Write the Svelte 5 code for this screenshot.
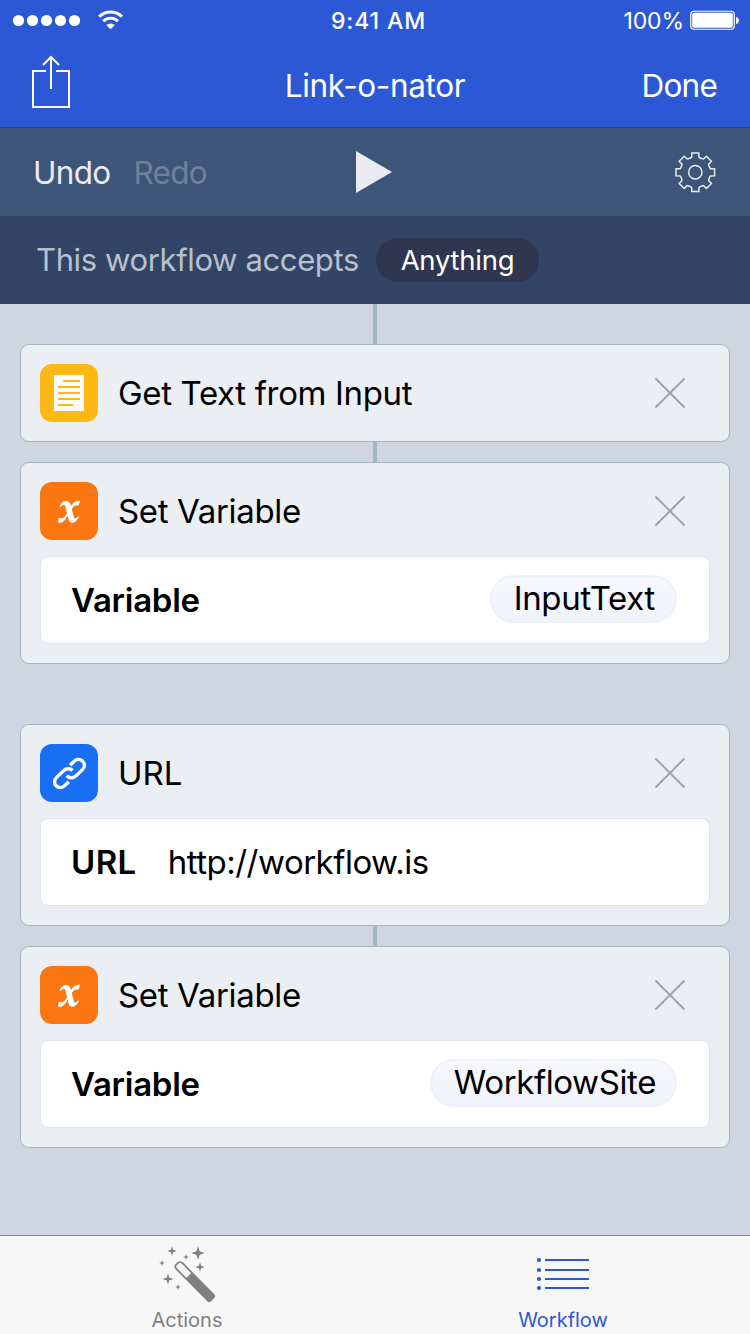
<script>
  const cards = [
    { icon: 'text', title: 'Get Text from Input', cls: 't-get', link: true },
    { icon: 'var', title: 'Set Variable', cls: 't-set', link: false, label: 'Variable', token: 'InputText', tokenCls: 'k-input' },
    { icon: 'url', title: 'URL', cls: 't-url', link: true, label: 'URL', value: 'http://workflow.is' },
    { icon: 'var', title: 'Set Variable', cls: 't-set', link: false, label: 'Variable', token: 'WorkflowSite', tokenCls: 'k-site' }
  ];

  function gearPath(cx, cy) {
    const outer = 19.6, inner = 15.2;
    const pts = [];
    for (let i = 0; i < 8; i++) {
      const c = (i * Math.PI) / 4;
      const spots = [[inner, -0.30], [inner + 0.4, -0.235], [outer, -0.18], [outer, 0.18], [inner + 0.4, 0.235], [inner, 0.30]];
      for (const [r, a] of spots) {
        pts.push(`${(cx + r * Math.sin(c + a)).toFixed(2)} ${(cy - r * Math.cos(c + a)).toFixed(2)}`);
      }
    }
    return 'M' + pts.join('L') + 'Z';
  }

  const sparkles = [
    [32, 15, 4.8], [58, 17, 6.8], [46, 21, 2.9], [22, 27, 2.9], [60, 31, 4.8], [28, 43, 5.6], [38, 51, 2.9]
  ];
  const star = ([x, y, r]) => {
    const k = r * 0.24;
    return `M${x} ${y - r}L${x + k} ${y - k}L${x + r} ${y}L${x + k} ${y + k}L${x} ${y + r}L${x - k} ${y + k}L${x - r} ${y}L${x - k} ${y - k}Z`;
  };
</script>

<div class="screen">
  <header>
    <div class="status">
      <svg class="signal" width="130" height="40" viewBox="0 0 130 40">
        {#each [18.5, 32.5, 46.5, 60.5, 74.5] as x}
          <circle cx={x} cy="20.5" r="5.6" fill="#fff" />
        {/each}
        <g fill="none" stroke="#fff" stroke-width="2.9">
          <path d="M99.2 16.6a16.3 16.3 0 0 1 22.8 0" />
          <path d="M103.2 21.1a10.6 10.6 0 0 1 14.8 0" />
        </g>
        <path d="M106.3 25.1a6.3 6.3 0 0 1 8.6 0L110.6 29.2Z" fill="#fff" />
      </svg>
      <span class="time">9:41 AM</span>
      <div class="power">
        <span class="pct">100%</span>
        <svg width="50" height="20" viewBox="0 0 50 20">
          <rect x="0.75" y="1.25" width="43.5" height="18" rx="3.2" fill="none" stroke="#fff" stroke-width="1.2" />
          <rect x="2.2" y="2.7" width="40.6" height="15.1" rx="1.8" fill="#fff" />
          <path d="M46 7c4 .8 4 6 0 7Z" fill="#fff" />
        </svg>
      </div>
    </div>
    <nav>
      <svg class="share" width="40" height="54" viewBox="0 0 40 54" fill="none" stroke="#fff" stroke-width="2">
        <path d="M15 16H2V52H38V16H25M20 34V2M12 10L20 2L28 10" />
      </svg>
      <h1>Link-o-nator</h1>
      <span class="done">Done</span>
    </nav>
  </header>

  <div class="toolbar">
    <div class="history"><span class="undo">Undo</span><span class="redo">Redo</span></div>
    <svg width="38" height="44" viewBox="0 0 38 44"><path d="M1 1L37 22L1 43Z" fill="#e9ebf1" /></svg>
    <div class="settings">
      <svg width="44" height="44" viewBox="0 0 44 44" fill="none" stroke="#e6e9ef" stroke-width="1.5">
        <path d={gearPath(22.3, 22.3)} /><circle cx="22.3" cy="22.3" r="6.7" />
      </svg>
    </div>
  </div>
  <div class="accepts">
    <span class="label">This workflow accepts</span>
    <span class="pill"><span>Anything</span></span>
  </div>

  <main>
    <div class="wire lead"></div>
    {#each cards as card, i}
      <section>
        <div class="head">
          <div class="tile {card.icon}">
            <svg width="58" height="58" viewBox="0 0 58 58">
              {#if card.icon === 'text'}
                <rect x="14" y="11" width="30" height="36" fill="#fff" />
                <path d="M23 17H40M18 23H40M18 29H40M18 35H40M18 41H33" stroke="#fdb814" stroke-width="2" />
              {:else if card.icon === 'var'}
                <g fill="#fff">
                  <path d="M19.6 24.2Q22 19 26 19C29.5 19 30.5 21.5 31.3 25L33.8 35C34.4 37.3 35.8 36.8 38.2 34.2L39 35C36.5 39.5 34.5 40.8 32.2 40.8C29.6 40.8 28.8 39 28.2 36L25.4 24.8C24.8 22.2 23.5 22 20.6 25Z" />
                  <path d="M18.6 35.8L18 40.8C21 41.2 23.5 40.5 26 36.5L31.8 27C34 23.5 35.5 23.5 38.5 23.6L40.2 18.8C36 18.6 33.4 20 31 24.2L26 33C23.5 37 21.8 36.5 18.6 35.8Z" />
                </g>
              {:else}
                <g fill="none" stroke="#fff" stroke-width="3.4">
                  <path d="M30.1 21.2L34.2 17.2C36.6 14.9 40.2 14.9 42.5 17.1C44.9 19.5 45 23 42.7 25.4L35.8 32C33.3 34.4 29 34.5 26.7 31.7" />
                  <path d="M32.5 26.5C30.2 24 26.2 24.3 23.8 26.5L16.3 33.6C13.9 36 14 39.7 16.3 41.9C18.8 44.1 22.2 44 24.5 41.8L28.8 37.7" />
                </g>
              {/if}
            </svg>
          </div>
          <h2 class={card.cls}>{card.title}</h2>
          <svg class="close" width="32" height="32" viewBox="0 0 32 32"><path d="M1.5 1.5L30.5 30.5M30.5 1.5L1.5 30.5" stroke="#a0a4a8" stroke-width="2" /></svg>
        </div>
        {#if card.label}
          <div class="field">
            <b class={card.label === 'URL' ? 'b-url' : 'b-var'}>{card.label}</b>
            {#if card.token}
              <span class="token"><span class={card.tokenCls}>{card.token}</span></span>
            {:else}
              <span class="value">{card.value}</span>
            {/if}
          </div>
        {/if}
      </section>
      {#if i < cards.length - 1}
        <div class={card.link ? 'wire' : 'space'}></div>
      {/if}
    {/each}
  </main>

  <footer>
    <div class="tab">
      <svg width="94" height="72" viewBox="0 0 94 72">
        {#each sparkles as s}<path d={star(s)} fill="#808080" />{/each}
        <g transform="translate(38.6 29.2) rotate(45.4)">
          <path d="M15 -4.2H1A3 3 0 0 0 -2 -1.2V1.2A3 3 0 0 0 1 4.2H15" fill="none" stroke="#808080" stroke-width="1.7" />
          <path d="M14.5 -5H45.5A3 3 0 0 1 48.5 -2V2A3 3 0 0 1 45.5 5H14.5Z" fill="#808080" />
        </g>
      </svg>
      <span class="f-act">Actions</span>
    </div>
    <div class="tab active">
      <svg width="94" height="72" viewBox="0 0 94 72">
        <path d="M29 24H73M29 34H73M29 43H73M29 52H73" stroke="#2c58d5" stroke-width="2" />
        {#each [24, 34, 43, 52] as y}<circle cx="23" cy={y} r="2.1" fill="#2c58d5" />{/each}
      </svg>
      <span class="f-wf">Workflow</span>
    </div>
  </footer>
</div>

<style>
  :global(body) { margin: 0; background: #cfd6e2; }
  .screen { width: 750px; height: 1334px; display: flex; flex-direction: column; overflow: hidden; font-family: Inter, "Liberation Sans", sans-serif; font-weight: 400; color: #000; background: #cfd6e2; white-space: nowrap; font-feature-settings: "calt" 0; }
  svg { display: block; flex: none; }
  h1, h2 { margin: 0; font-weight: inherit; }
  header { height: 127px; background: #2c58d5; border-bottom: 1px solid #2a4488; color: #fff; }
  .status { height: 40px; display: grid; grid-template-columns: 250px 1fr 250px; grid-template-rows: 40px; align-items: center; }
  .time { font-size: 23px; font-weight: 550; text-align: center; padding: 2px 0 0 7px; line-height: 40px; letter-spacing: 0.9px; }
  .power { display: flex; align-items: center; justify-content: flex-end; gap: 6px; padding-right: 10px; }
  .pct { font-size: 23px; line-height: 40px; padding-top: 2px; letter-spacing: -0.1px; }
  nav { height: 87px; display: grid; grid-template-columns: 200px 1fr 200px; grid-template-rows: 90px; align-items: center; }
  .share { margin: -6px 0 0 31px; }
  h1 { font-size: 31.5px; text-align: center; line-height: 88px; padding-top: 2px; letter-spacing: -0.35px; }
  .done { font-size: 31.5px; text-align: right; padding: 2px 33px 0 0; line-height: 88px; letter-spacing: -0.8px; }
  .toolbar { height: 88px; background: #3e557a; display: grid; grid-template-columns: 355px 1fr 200px; grid-template-rows: 88px; align-items: center; }
  .history { display: flex; gap: 23px; padding: 2px 0 0 33px; font-size: 31.5px; line-height: 86px; color: #e9ebf1; letter-spacing: -0.7px; }
  .redo { color: #71809d; }
  .settings { display: flex; justify-content: flex-end; padding-right: 33px; }
  .accepts { height: 88px; background: #324566; display: flex; align-items: center; padding-left: 36px; gap: 17px; }
  .label { width: 323px; font-size: 31px; line-height: 86px; color: #b8c0cd; letter-spacing: -0.37px; }
  .pill { width: 163px; height: 44px; border-radius: 22px; background: #2e3650; color: #fff; display: flex; align-items: center; justify-content: center; font-size: 27.5px; line-height: 46px; letter-spacing: -0.25px; }
  main { flex: 1; display: flex; flex-direction: column; align-items: center; }
  .wire { width: 4px; height: 20px; background: #a4b5c3; flex: none; }
  .lead { height: 40px; }
  .space { height: 60px; flex: none; }
  section { width: 710px; box-sizing: border-box; border: 1px solid #a3b5c4; border-radius: 9px; background: #ebeff4; padding: 19px; flex: none; }
  .head { display: flex; align-items: center; height: 58px; }
  .tile { width: 58px; height: 58px; border-radius: 12px; flex: none; }
  .text { background: #fdb814; }
  .var { background: #fb7611; }
  .url { background: #196ff4; }
  h2 { font-size: 33px; line-height: 58px; margin-left: 20px; flex: 1; letter-spacing: -0.35px; }
  .t-url { letter-spacing: 0; }
  .close { margin-right: 24px; }
  .field { margin-top: 16px; height: 88px; box-sizing: border-box; border: 1px solid #dce4ec; border-radius: 8px; background: #fff; display: flex; align-items: center; padding: 0 32px 0 30px; font-size: 33px; }
  b { font-weight: 600; }
  .b-var { letter-spacing: -0.25px; }
  .b-url { letter-spacing: 0.4px; }
  .value { margin-left: 31px; letter-spacing: -0.5px; }
  .token { margin-left: auto; height: 48px; box-sizing: border-box; border: 2px solid #eef1f7; border-radius: 24px; background: linear-gradient(#f6f8fc, #f0f3fb); padding: 0 19px 2px 22px; display: flex; align-items: center; margin-top: -2px; }
  .k-input { letter-spacing: -0.35px; padding-right: 1px; }
  .k-site { letter-spacing: -0.4px; }
  footer { height: 98px; border-top: 1px solid #8b8d94; background: #f7f7f7; display: grid; grid-template-columns: 374px 1fr; color: #808080; }
  .tab { display: flex; flex-direction: column; align-items: center; font-size: 20px; line-height: 24px; }
  .active { color: #2c58d5; padding-left: 2px; }
</style>
